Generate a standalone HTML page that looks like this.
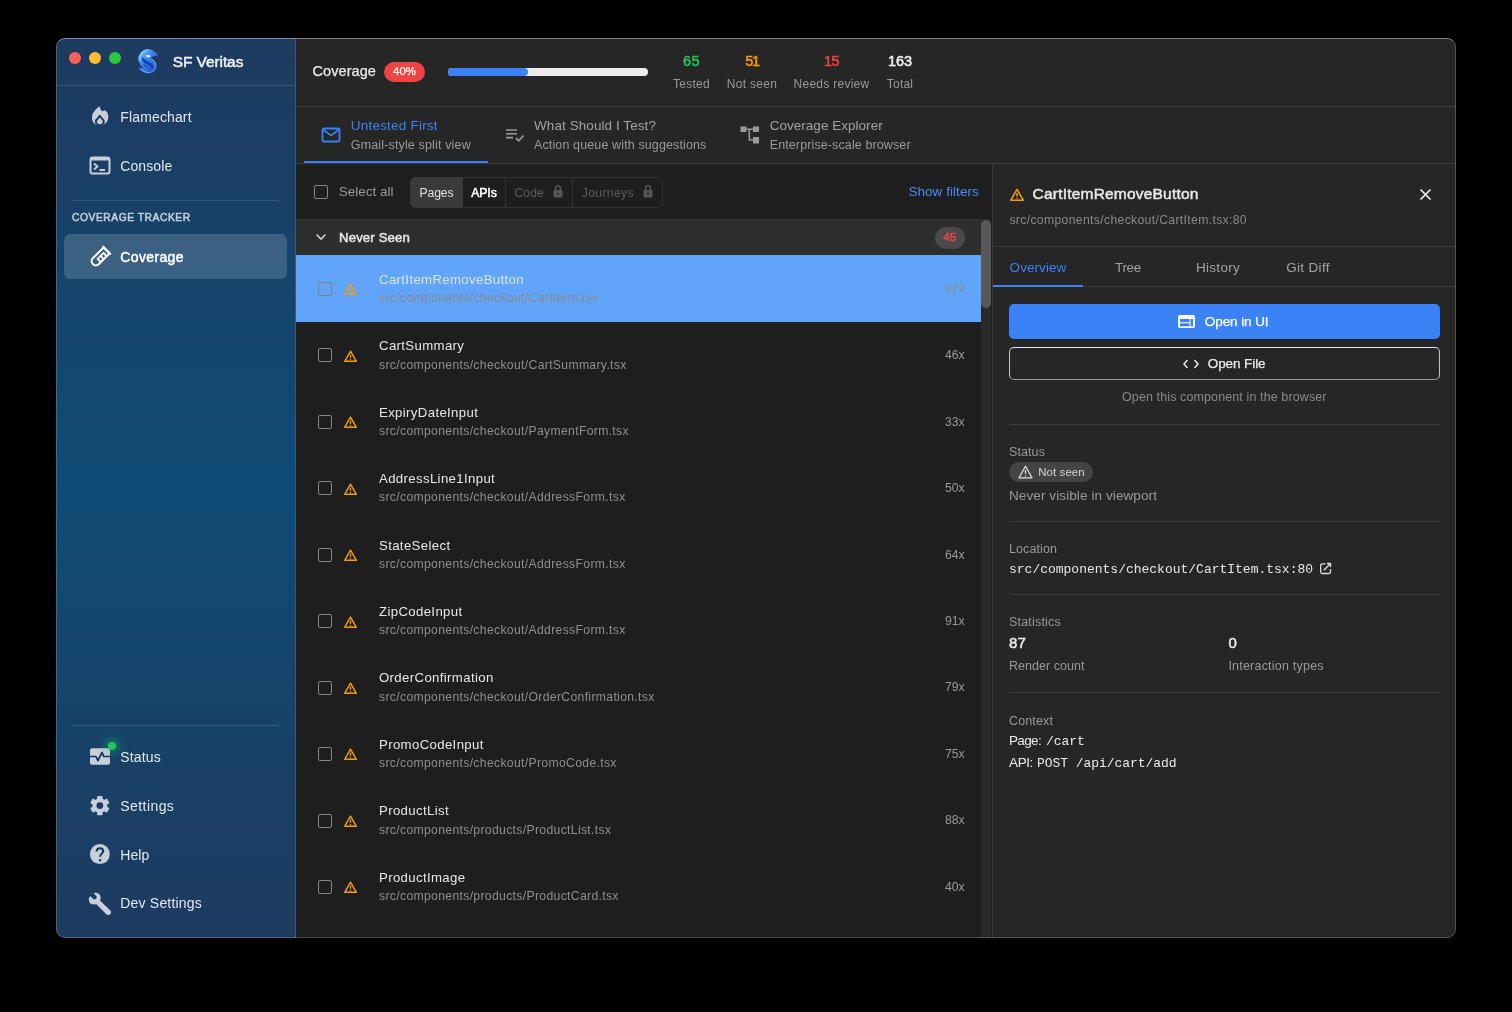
<!DOCTYPE html>
<html><head><meta charset="utf-8"><style>
html,body{margin:0;padding:0;background:#000;width:1512px;height:1012px;overflow:hidden}
#win{will-change:transform;position:absolute;left:56px;top:38px;width:1400px;height:900px;border-radius:9px;overflow:hidden;background:#1e1e1e}
.r{position:absolute;display:block}
.t{position:absolute;white-space:pre}
.S{font-family:"Liberation Sans", sans-serif}
.M{font-family:"Liberation Mono", monospace}
#edge{position:absolute;left:56px;top:38px;width:1400px;height:900px;border-radius:9px;box-sizing:border-box;border:1px solid rgba(255,255,255,0.2);border-top-color:rgba(255,255,255,0.42);pointer-events:none}
</style></head><body>
<div id="win">
<div class='r' style='left:0px;top:0px;width:239px;height:900px;background:linear-gradient(180deg,#1e3a5f 0%,#0f4c75 50%,#1e3a5f 100%)'></div>
<div class='r' style='left:239px;top:0px;width:1px;height:900px;background:#3a5878'></div>
<div class='r' style='left:13px;top:14px;width:12px;height:12px;background:#ff5f57;border-radius:50%'></div>
<div class='r' style='left:33px;top:14px;width:12px;height:12px;background:#febc2e;border-radius:50%'></div>
<div class='r' style='left:53px;top:14px;width:12px;height:12px;background:#28c840;border-radius:50%'></div>
<svg class='r' style='left:80px;top:9px;' width='25' height='28' viewBox='136 47 25 28'>
<defs><linearGradient id='lg' x1='0' y1='0' x2='1' y2='1'><stop offset='0' stop-color='#9adcff'/><stop offset='0.4' stop-color='#3a86ee'/><stop offset='0.75' stop-color='#2a64d8'/><stop offset='1' stop-color='#6cc8ff'/></linearGradient></defs>
<path d='M138 59.4 C139 53 143 49.2 148 49 C152 49 155.5 52 158.5 55.4 C155 55.6 152 56.4 150.5 57.8 C154 59.5 156.5 62.5 156.4 66.5 C156.2 70.5 152.5 73.4 148.5 73.4 C144 73.4 140 70.8 138 67.5 C140 68.6 141.8 69 143.2 68.8 C140.8 66.2 139.6 63 138 59.4 Z' fill='url(#lg)'/>
<path d='M142.3 56.8 C141.2 60.2 143.4 63.2 147 64.6 C150.2 65.9 152.2 67.6 151.6 70.6 C153.8 68.6 153.8 65 150.6 62.9 C148 61.3 144.8 60.4 142.3 56.8 Z' fill='#1b3cb4'/>
<path d='M143.5 64.5 C145.5 66.5 148 67 149.5 69.5' fill='none' stroke='#2451c8' stroke-width='1.1'/>
<path d='M151.2 58.6 C154.6 60.6 156 63.6 155.8 66.6 M140.6 68.6 C143 71 146 72.6 149 72.6 M139.5 58.5 C140.5 54 143.5 51 147.5 50.3' fill='none' stroke='#a8e4ff' stroke-width='0.8' opacity='0.8'/>
<ellipse cx='148.3' cy='56.2' rx='2.3' ry='1.4' fill='#e6efff' opacity='0.9'/>
</svg>
<div class='r' style='left:0px;top:47px;width:239px;height:1px;background:#3a5676'></div>
<svg class='r' style='left:32px;top:66px;' width='24' height='24' viewBox='88 104 24 24'>
<path d='M99.5 106.2 C97 108 93.6 111 92.4 114.5 C91.4 117.5 91.8 121 94 123.2 C95.8 124.8 98 125.1 99.8 125.1 C102 125.1 104.6 124.5 106.3 122.6 C108.3 120.3 108.7 117 108 114.5 C107.5 112.8 106.5 111.2 105 110.6 C104 110.3 103 110.8 102.3 111.4 C101.1 110.3 100.1 108.5 99.5 106.2 Z' fill='#c7cfdb'/>
<path d='M99.8 114.5 L95.5 119.4 C94.5 120.7 94.7 122.9 95.9 124.1 C96.9 125.1 98.4 125.6 99.8 125.6 C101.2 125.6 102.7 125.1 103.7 124.1 C104.9 122.9 105.1 120.7 104.1 119.4 Z' fill='#1c3b60'/>
<path d='M99.85 117.4 L97.4 120.5 C96.8 121.3 96.9 122.6 97.6 123.3 C98.2 123.9 99 124.2 99.85 124.2 C100.7 124.2 101.5 123.9 102.1 123.3 C102.8 122.6 102.9 121.3 102.3 120.5 Z' fill='#c7cfdb'/>
</svg>
<svg class='r' style='left:33px;top:118px;' width='22' height='19' viewBox='0 0 22 19'>
<rect x='1.5' y='1.5' width='19' height='16' rx='2' fill='none' stroke='#c7cfdb' stroke-width='2'/>
<rect x='1.5' y='1.5' width='19' height='3' fill='#c7cfdb'/>
<path d='M5 7.5 L8.5 10.5 L5 13.5' fill='none' stroke='#c7cfdb' stroke-width='1.8'/>
<path d='M10.5 14 L16 14' stroke='#c7cfdb' stroke-width='1.8'/>
</svg>
<div class='r' style='left:16px;top:162px;width:207px;height:1px;background:#3a5676'></div>
<div class='r' style='left:8px;top:196px;width:223px;height:45px;background:rgba(255,255,255,0.16);border-radius:6px'></div>
<svg class='r' style='left:30px;top:207px;' width='26' height='26' viewBox='0 0 26 26'>
<g transform='rotate(45 13 13)'>
<rect x='7.2' y='1' width='11.6' height='2.4' rx='0.6' fill='#fff'/>
<path d='M8.8 2.5 L8.8 17.6 C8.8 20 10.7 21.6 13 21.6 C15.3 21.6 17.2 20 17.2 17.6 L17.2 2.5' fill='none' stroke='#fff' stroke-width='2'/>
<path d='M12.6 5.5 L12.6 15.5' stroke='#fff' stroke-width='1.7'/>
<path d='M12.6 6.3 L17 6.3 M12.6 10.5 L16.2 10.5 M12.6 14.5 L16.2 14.5' stroke='#fff' stroke-width='1.9'/>
<rect x='13.4' y='7.1' width='2.9' height='2.6' fill='none'/>
</g>
</svg>
<div class='r' style='left:16px;top:687px;width:207px;height:1px;background:#3a5676'></div>
<svg class='r' style='left:32px;top:708px;' width='24' height='22' viewBox='88 746 24 22'>
<rect x='90' y='748.2' width='20' height='16.5' rx='2.2' fill='#c7cfdb'/>
<path d='M89 756.5 L96 756.5 L97.9 760.6 L102 752.3 L103.8 756.5 L111 756.5' fill='none' stroke='#132f52' stroke-width='1.7' stroke-linejoin='round'/>
</svg>
<div class='r' style='left:51.8px;top:704.3px;width:8.0px;height:8.0px;background:#22c55e;border-radius:50%;box-shadow:0 0 9px 4px rgba(34,197,94,0.36)'></div>
<svg class='r' style='left:32px;top:756px;' width='24' height='24' viewBox='88 794 24 24'><rect x='97.15' y='795.9' width='5.4' height='5' rx='0.8' fill='#c7cfdb' transform='rotate(0 99.85 805.6)'/><rect x='97.15' y='795.9' width='5.4' height='5' rx='0.8' fill='#c7cfdb' transform='rotate(60 99.85 805.6)'/><rect x='97.15' y='795.9' width='5.4' height='5' rx='0.8' fill='#c7cfdb' transform='rotate(120 99.85 805.6)'/><rect x='97.15' y='795.9' width='5.4' height='5' rx='0.8' fill='#c7cfdb' transform='rotate(180 99.85 805.6)'/><rect x='97.15' y='795.9' width='5.4' height='5' rx='0.8' fill='#c7cfdb' transform='rotate(240 99.85 805.6)'/><rect x='97.15' y='795.9' width='5.4' height='5' rx='0.8' fill='#c7cfdb' transform='rotate(300 99.85 805.6)'/><circle cx='99.85' cy='805.6' r='7.3' fill='#c7cfdb'/><circle cx='99.85' cy='805.6' r='3.4' fill='#1b3b61'/></svg>
<svg class='r' style='left:32px;top:804px;' width='24' height='24' viewBox='88 842 24 24'>
<circle cx='99.85' cy='854.1' r='10' fill='#c7cfdb'/>
<path d='M96.7 851.6 C96.7 849.4 98.1 848.2 99.95 848.2 C101.85 848.2 103.2 849.5 103.2 851.1 C103.2 853.2 100.2 853.7 100.1 856.8' fill='none' stroke='#19385e' stroke-width='2.1'/>
<rect x='99' y='859.2' width='2.2' height='2.2' fill='#19385e'/>
</svg>
<svg class='r' style='left:32px;top:854px;' width='24' height='24' viewBox='0 0 24 24'>
<path d='M2.5 4.2 L5.8 7.4 L8.2 6.8 L8.8 4.4 L5.6 1.2 C8.2 0.2 11.2 1.2 12.3 3.7 C13 5.3 12.8 7 12 8.4 L22.4 18.6 C23.3 19.5 23.3 20.9 22.4 21.8 L21.8 22.4 C20.9 23.3 19.5 23.3 18.6 22.4 L8.2 12 C6.8 12.7 5.1 12.8 3.6 12.1 C1.2 11 0.2 7.8 1.2 5.4 Z' fill='#c7cfdb'/>
</svg>
<div class='r' style='left:240px;top:0px;width:1160px;height:68px;background:#262626'></div>
<div class='r' style='left:240px;top:68px;width:1160px;height:1px;background:#3a3a3a'></div>
<div class='r' style='left:328px;top:24px;width:41px;height:20px;background:#ef4444;border-radius:10px'></div>
<div class='r' style='left:392px;top:30px;width:200px;height:8px;background:#ececec;border-radius:4px'></div>
<div class='r' style='left:392px;top:30px;width:80px;height:8px;background:#3b82f6;border-radius:4px'></div>
<div class='r' style='left:240px;top:69px;width:1160px;height:57px;background:#262626'></div>
<div class='r' style='left:240px;top:125px;width:1160px;height:1px;background:#3a3a3a'></div>
<div class='r' style='left:248px;top:123px;width:184px;height:2px;background:#3b82f6'></div>
<svg class='r' style='left:265px;top:89px;' width='20' height='16' viewBox='0 0 20 16'><rect x='1.5' y='1.5' width='17' height='13' rx='1.5' fill='none' stroke='#3b82f6' stroke-width='1.8'/><path d='M1.8 2.5 L10 8.5 L18.2 2.5' fill='none' stroke='#3b82f6' stroke-width='1.8'/></svg>
<svg class='r' style='left:449px;top:90px;' width='20' height='15' viewBox='0 0 20 15'><path d='M1 2 L12 2 M1 5.8 L12 5.8 M1 9.6 L8 9.6' stroke='#9a9a9a' stroke-width='1.6'/><path d='M11 10 L13.8 12.8 L18.5 7.5' fill='none' stroke='#9a9a9a' stroke-width='1.8'/></svg>
<svg class='r' style='left:684px;top:88px;' width='20' height='18' viewBox='0 0 20 18'><rect x='0.5' y='0.5' width='6' height='5.5' fill='#9a9a9a'/><rect x='13' y='0.5' width='6' height='5.5' fill='#9a9a9a'/><rect x='13' y='11' width='6' height='6.5' fill='#9a9a9a'/><path d='M6.5 3.2 L13 3.2 M9.3 3.2 L9.3 14 L13 14' fill='none' stroke='#9a9a9a' stroke-width='1.6'/></svg>
<div class='r' style='left:240px;top:126px;width:696px;height:774px;background:#1e1e1e'></div>
<div class='r' style='left:936px;top:126px;width:1px;height:774px;background:#3a3a3a'></div>
<div class='r' style='left:258px;top:147px;width:14px;height:14px;border:1.5px solid #8a8a8a;border-radius:2px;box-sizing:border-box'></div>
<div class='r' style='left:354px;top:139px;width:253px;height:31px;border:1px solid #333;border-radius:6px;box-sizing:border-box'></div>
<div class='r' style='left:354px;top:139px;width:53px;height:31px;background:#3a3a3a;border-radius:6px 0 0 6px'></div>
<div class='r' style='left:449px;top:140px;width:1px;height:29px;background:#333'></div>
<div class='r' style='left:516px;top:140px;width:1px;height:29px;background:#333'></div>
<svg class='r' style='left:496.5px;top:147px;' width='10' height='13' viewBox='0 0 10 13'><rect x='0.5' y='5' width='9' height='7.5' rx='1' fill='#555'/><path d='M2.5 5.5 L2.5 3.5 C2.5 1.8 3.6 0.8 5 0.8 C6.4 0.8 7.5 1.8 7.5 3.5 L7.5 5.5' fill='none' stroke='#555' stroke-width='1.6'/><circle cx='5' cy='8.8' r='1' fill='#1e1e1e'/></svg>
<svg class='r' style='left:586.5px;top:147px;' width='10' height='13' viewBox='0 0 10 13'><rect x='0.5' y='5' width='9' height='7.5' rx='1' fill='#555'/><path d='M2.5 5.5 L2.5 3.5 C2.5 1.8 3.6 0.8 5 0.8 C6.4 0.8 7.5 1.8 7.5 3.5 L7.5 5.5' fill='none' stroke='#555' stroke-width='1.6'/><circle cx='5' cy='8.8' r='1' fill='#1e1e1e'/></svg>
<div class='r' style='left:240px;top:181px;width:685px;height:36px;background:#2e2e2e'></div>
<div class='r' style='left:240px;top:181px;width:685px;height:1px;background:#353535'></div>
<svg class='r' style='left:259px;top:195px;' width='12' height='8' viewBox='0 0 12 8'><path d='M1.5 1.5 L6 6 L10.5 1.5' fill='none' stroke='#d0d0d0' stroke-width='1.6'/></svg>
<div class='r' style='left:878.5px;top:188.5px;width:30.5px;height:22.0px;background:#4a4a4a;border-radius:11px'></div>
<div class='r' style='left:240px;top:217px;width:685px;height:67px;background:#60a5fa'></div>
<div class='r' style='left:261.5px;top:244px;width:14.0px;height:14px;border:1.6px solid #808080;border-radius:2px;box-sizing:border-box'></div>
<svg class='r' style='left:287.5px;top:245px;' width='13' height='12' viewBox='0 0 13 12'><path d='M6.5 1.2 L12.3 11.3 L0.7 11.3 Z' fill='none' stroke='#f59e0b' stroke-width='1.4' stroke-linejoin='round'/><path d='M6.5 4.6 L6.5 7.8' stroke='#f59e0b' stroke-width='1.4'/><circle cx='6.5' cy='9.5' r='0.75' fill='#f59e0b'/></svg>
<div class='r' style='left:261.5px;top:310px;width:14.0px;height:14px;border:1.6px solid #858585;border-radius:2px;box-sizing:border-box'></div>
<svg class='r' style='left:287.5px;top:312px;' width='13' height='12' viewBox='0 0 13 12'><path d='M6.5 1.2 L12.3 11.3 L0.7 11.3 Z' fill='none' stroke='#f59e0b' stroke-width='1.4' stroke-linejoin='round'/><path d='M6.5 4.6 L6.5 7.8' stroke='#f59e0b' stroke-width='1.4'/><circle cx='6.5' cy='9.5' r='0.75' fill='#f59e0b'/></svg>
<div class='r' style='left:261.5px;top:377px;width:14.0px;height:14px;border:1.6px solid #858585;border-radius:2px;box-sizing:border-box'></div>
<svg class='r' style='left:287.5px;top:378px;' width='13' height='12' viewBox='0 0 13 12'><path d='M6.5 1.2 L12.3 11.3 L0.7 11.3 Z' fill='none' stroke='#f59e0b' stroke-width='1.4' stroke-linejoin='round'/><path d='M6.5 4.6 L6.5 7.8' stroke='#f59e0b' stroke-width='1.4'/><circle cx='6.5' cy='9.5' r='0.75' fill='#f59e0b'/></svg>
<div class='r' style='left:261.5px;top:443px;width:14.0px;height:14px;border:1.6px solid #858585;border-radius:2px;box-sizing:border-box'></div>
<svg class='r' style='left:287.5px;top:445px;' width='13' height='12' viewBox='0 0 13 12'><path d='M6.5 1.2 L12.3 11.3 L0.7 11.3 Z' fill='none' stroke='#f59e0b' stroke-width='1.4' stroke-linejoin='round'/><path d='M6.5 4.6 L6.5 7.8' stroke='#f59e0b' stroke-width='1.4'/><circle cx='6.5' cy='9.5' r='0.75' fill='#f59e0b'/></svg>
<div class='r' style='left:261.5px;top:510px;width:14.0px;height:14px;border:1.6px solid #858585;border-radius:2px;box-sizing:border-box'></div>
<svg class='r' style='left:287.5px;top:511px;' width='13' height='12' viewBox='0 0 13 12'><path d='M6.5 1.2 L12.3 11.3 L0.7 11.3 Z' fill='none' stroke='#f59e0b' stroke-width='1.4' stroke-linejoin='round'/><path d='M6.5 4.6 L6.5 7.8' stroke='#f59e0b' stroke-width='1.4'/><circle cx='6.5' cy='9.5' r='0.75' fill='#f59e0b'/></svg>
<div class='r' style='left:261.5px;top:576px;width:14.0px;height:14px;border:1.6px solid #858585;border-radius:2px;box-sizing:border-box'></div>
<svg class='r' style='left:287.5px;top:578px;' width='13' height='12' viewBox='0 0 13 12'><path d='M6.5 1.2 L12.3 11.3 L0.7 11.3 Z' fill='none' stroke='#f59e0b' stroke-width='1.4' stroke-linejoin='round'/><path d='M6.5 4.6 L6.5 7.8' stroke='#f59e0b' stroke-width='1.4'/><circle cx='6.5' cy='9.5' r='0.75' fill='#f59e0b'/></svg>
<div class='r' style='left:261.5px;top:643px;width:14.0px;height:14px;border:1.6px solid #858585;border-radius:2px;box-sizing:border-box'></div>
<svg class='r' style='left:287.5px;top:644px;' width='13' height='12' viewBox='0 0 13 12'><path d='M6.5 1.2 L12.3 11.3 L0.7 11.3 Z' fill='none' stroke='#f59e0b' stroke-width='1.4' stroke-linejoin='round'/><path d='M6.5 4.6 L6.5 7.8' stroke='#f59e0b' stroke-width='1.4'/><circle cx='6.5' cy='9.5' r='0.75' fill='#f59e0b'/></svg>
<div class='r' style='left:261.5px;top:709px;width:14.0px;height:14px;border:1.6px solid #858585;border-radius:2px;box-sizing:border-box'></div>
<svg class='r' style='left:287.5px;top:710px;' width='13' height='12' viewBox='0 0 13 12'><path d='M6.5 1.2 L12.3 11.3 L0.7 11.3 Z' fill='none' stroke='#f59e0b' stroke-width='1.4' stroke-linejoin='round'/><path d='M6.5 4.6 L6.5 7.8' stroke='#f59e0b' stroke-width='1.4'/><circle cx='6.5' cy='9.5' r='0.75' fill='#f59e0b'/></svg>
<div class='r' style='left:261.5px;top:776px;width:14.0px;height:14px;border:1.6px solid #858585;border-radius:2px;box-sizing:border-box'></div>
<svg class='r' style='left:287.5px;top:777px;' width='13' height='12' viewBox='0 0 13 12'><path d='M6.5 1.2 L12.3 11.3 L0.7 11.3 Z' fill='none' stroke='#f59e0b' stroke-width='1.4' stroke-linejoin='round'/><path d='M6.5 4.6 L6.5 7.8' stroke='#f59e0b' stroke-width='1.4'/><circle cx='6.5' cy='9.5' r='0.75' fill='#f59e0b'/></svg>
<div class='r' style='left:261.5px;top:842px;width:14.0px;height:14px;border:1.6px solid #858585;border-radius:2px;box-sizing:border-box'></div>
<svg class='r' style='left:287.5px;top:843px;' width='13' height='12' viewBox='0 0 13 12'><path d='M6.5 1.2 L12.3 11.3 L0.7 11.3 Z' fill='none' stroke='#f59e0b' stroke-width='1.4' stroke-linejoin='round'/><path d='M6.5 4.6 L6.5 7.8' stroke='#f59e0b' stroke-width='1.4'/><circle cx='6.5' cy='9.5' r='0.75' fill='#f59e0b'/></svg>
<div class='r' style='left:925px;top:181px;width:10px;height:719px;background:#2a2a2a'></div>
<div class='r' style='left:925px;top:182px;width:10px;height:88px;background:#585858;border-radius:5px'></div>
<div class='r' style='left:937px;top:126px;width:463px;height:774px;background:#262626'></div>
<svg class='r' style='left:953.5px;top:149.8px;' width='14' height='13' viewBox='0 0 13 12'><path d='M6.5 1.2 L12.3 11.3 L0.7 11.3 Z' fill='none' stroke='#f59e0b' stroke-width='1.4' stroke-linejoin='round'/><path d='M6.5 4.6 L6.5 7.8' stroke='#f59e0b' stroke-width='1.4'/><circle cx='6.5' cy='9.5' r='0.75' fill='#f59e0b'/></svg>
<svg class='r' style='left:1363px;top:150px;' width='13' height='13' viewBox='0 0 13 13'><path d='M1.5 1.5 L11.5 11.5 M11.5 1.5 L1.5 11.5' stroke='#f0f0f0' stroke-width='1.7'/></svg>
<div class='r' style='left:937px;top:208px;width:463px;height:1px;background:#3a3a3a'></div>
<div class='r' style='left:937px;top:248px;width:463px;height:1px;background:#3a3a3a'></div>
<div class='r' style='left:937px;top:247px;width:90px;height:2px;background:#3b82f6'></div>
<div class='r' style='left:953px;top:266px;width:431px;height:35px;background:#3b82f6;border-radius:5px'></div>
<svg class='r' style='left:1122px;top:277px;' width='17' height='13' viewBox='0 0 17 13'><rect x='0' y='0' width='17' height='13' rx='2' fill='#fff'/><rect x='2' y='4' width='9.5' height='3.2' fill='#3b82f6'/><rect x='2' y='8.3' width='9.5' height='3' fill='#3b82f6'/><rect x='12.5' y='4' width='2.5' height='7.3' fill='#3b82f6'/></svg>
<div class='r' style='left:953px;top:309px;width:431px;height:33px;border:1.5px solid #c4c4c4;border-top-color:#e6e6e6;border-bottom-color:#9c9c9c;border-radius:5px;box-sizing:border-box'></div>
<svg class='r' style='left:1126.5px;top:320.5px;' width='16' height='10' viewBox='0 0 16 10'><path d='M4.5 1 L1 5 L4.5 9 M11.5 1 L15 5 L11.5 9' fill='none' stroke='#e8e8e8' stroke-width='1.5'/></svg>
<div class='r' style='left:953px;top:386px;width:431px;height:1px;background:#3a3a3a'></div>
<div class='r' style='left:953px;top:424px;width:84px;height:20px;background:#444444;border-radius:10px'></div>
<svg class='r' style='left:962px;top:427px;' width='15' height='14' viewBox='0 0 15 14'><path d='M7.5 1.2 L14 12.8 L1 12.8 Z' fill='none' stroke='#e0e0e0' stroke-width='1.3' stroke-linejoin='round'/><path d='M7.5 5 L7.5 8.8' stroke='#e0e0e0' stroke-width='1.3'/><circle cx='7.5' cy='10.7' r='0.7' fill='#e0e0e0'/></svg>
<div class='r' style='left:953px;top:483px;width:431px;height:1px;background:#3a3a3a'></div>
<svg class='r' style='left:1263px;top:524px;' width='13' height='13' viewBox='0 0 13 13'><path d='M6.5 1.8 L3.2 1.8 C2.2 1.8 1.7 2.3 1.7 3.3 L1.7 10 C1.7 11 2.2 11.5 3.2 11.5 L10 11.5 C11 11.5 11.5 11 11.5 10 L11.5 7' fill='none' stroke='#e0e0e0' stroke-width='1.3'/><path d='M8 1.5 L11.5 1.5 L11.5 5 M11.3 1.7 L4.8 8.2' fill='none' stroke='#e0e0e0' stroke-width='1.3'/></svg>
<div class='r' style='left:953px;top:556px;width:431px;height:1px;background:#3a3a3a'></div>
<div class='r' style='left:953px;top:654px;width:431px;height:1px;background:#3a3a3a'></div>
<div class='t S' style='left:116.70px;top:16.23px;font-size:15.5px;line-height:15.5px;color:#eef2f7;font-weight:400;letter-spacing:-0.090px;-webkit-text-stroke:0.5px #eef2f7;'>SF Veritas</div>
<div class='t S' style='left:64.30px;top:71.90px;font-size:14px;line-height:14px;color:#e3e8ef;font-weight:400;letter-spacing:0.137px;'>Flamechart</div>
<div class='t S' style='left:64.30px;top:121.10px;font-size:14px;line-height:14px;color:#e3e8ef;font-weight:400;letter-spacing:0.089px;'>Console</div>
<div class='t S' style='left:16.00px;top:175.25px;font-size:10.3px;line-height:10.3px;color:#c8d0dc;font-weight:400;letter-spacing:0.528px;-webkit-text-stroke:0.5px #c8d0dc;'>COVERAGE TRACKER</div>
<div class='t S' style='left:64.30px;top:212.30px;font-size:14px;line-height:14px;color:#ffffff;font-weight:400;letter-spacing:0.350px;-webkit-text-stroke:0.5px #ffffff;'>Coverage</div>
<div class='t S' style='left:64.30px;top:711.90px;font-size:14px;line-height:14px;color:#e3e8ef;font-weight:400;letter-spacing:0.166px;'>Status</div>
<div class='t S' style='left:64.30px;top:760.80px;font-size:14px;line-height:14px;color:#e3e8ef;font-weight:400;letter-spacing:0.426px;'>Settings</div>
<div class='t S' style='left:64.30px;top:810.10px;font-size:14px;line-height:14px;color:#e3e8ef;font-weight:400;letter-spacing:0.051px;'>Help</div>
<div class='t S' style='left:64.30px;top:858.40px;font-size:14px;line-height:14px;color:#e3e8ef;font-weight:400;letter-spacing:0.194px;'>Dev Settings</div>
<div class='t S' style='left:256.50px;top:26.17px;font-size:14.5px;line-height:14.5px;color:#ececec;font-weight:400;letter-spacing:0.078px;-webkit-text-stroke:0.25px #ececec;'>Coverage</div>
<div class='t S' style='left:337.00px;top:27.72px;font-size:11.5px;line-height:11.5px;color:#ffffff;font-weight:400;letter-spacing:-0.010px;-webkit-text-stroke:0.25px #ffffff;'>40%</div>
<div class='t S' style='left:627.00px;top:15.67px;font-size:14.5px;line-height:14.5px;color:#22c55e;font-weight:400;letter-spacing:0.430px;-webkit-text-stroke:0.5px #22c55e;'>65</div>
<div class='t S' style='left:617.00px;top:39.80px;font-size:12px;line-height:12px;color:#9a9a9a;font-weight:400;letter-spacing:0.273px;'>Tested</div>
<div class='t S' style='left:689.25px;top:15.67px;font-size:14.5px;line-height:14.5px;color:#f59e0b;font-weight:400;letter-spacing:-1.320px;-webkit-text-stroke:0.5px #f59e0b;'>51</div>
<div class='t S' style='left:670.75px;top:39.80px;font-size:12px;line-height:12px;color:#9a9a9a;font-weight:400;letter-spacing:0.309px;'>Not seen</div>
<div class='t S' style='left:768.00px;top:15.67px;font-size:14.5px;line-height:14.5px;color:#ef4444;font-weight:400;letter-spacing:-0.570px;-webkit-text-stroke:0.5px #ef4444;'>15</div>
<div class='t S' style='left:737.50px;top:39.80px;font-size:12px;line-height:12px;color:#9a9a9a;font-weight:400;letter-spacing:0.275px;'>Needs review</div>
<div class='t S' style='left:832.00px;top:15.67px;font-size:14.5px;line-height:14.5px;color:#f0f0f0;font-weight:400;letter-spacing:-0.068px;-webkit-text-stroke:0.5px #f0f0f0;'>163</div>
<div class='t S' style='left:830.75px;top:39.80px;font-size:12px;line-height:12px;color:#9a9a9a;font-weight:400;letter-spacing:0.228px;'>Total</div>
<div class='t S' style='left:294.80px;top:80.53px;font-size:13.5px;line-height:13.5px;color:#3b82f6;font-weight:400;letter-spacing:0.212px;'>Untested First</div>
<div class='t S' style='left:294.80px;top:100.97px;font-size:12.5px;line-height:12.5px;color:#9a9a9a;font-weight:400;letter-spacing:0.151px;'>Gmail-style split view</div>
<div class='t S' style='left:478.00px;top:80.53px;font-size:13.5px;line-height:13.5px;color:#a3a3a3;font-weight:400;letter-spacing:0.075px;'>What Should I Test?</div>
<div class='t S' style='left:478.00px;top:100.97px;font-size:12.5px;line-height:12.5px;color:#9a9a9a;font-weight:400;letter-spacing:0.125px;'>Action queue with suggestions</div>
<div class='t S' style='left:713.70px;top:80.53px;font-size:13.5px;line-height:13.5px;color:#a3a3a3;font-weight:400;letter-spacing:0.026px;'>Coverage Explorer</div>
<div class='t S' style='left:713.70px;top:100.97px;font-size:12.5px;line-height:12.5px;color:#9a9a9a;font-weight:400;letter-spacing:0.115px;'>Enterprise-scale browser</div>
<div class='t S' style='left:282.80px;top:147.22px;font-size:13.5px;line-height:13.5px;color:#9a9a9a;font-weight:400;letter-spacing:-0.008px;'>Select all</div>
<div class='t S' style='left:363.50px;top:148.83px;font-size:12.2px;line-height:12.2px;color:#e0e0e0;font-weight:400;letter-spacing:-0.113px;'>Pages</div>
<div class='t S' style='left:415.20px;top:148.83px;font-size:12.2px;line-height:12.2px;color:#ffffff;font-weight:400;letter-spacing:-0.062px;-webkit-text-stroke:0.5px #ffffff;'>APIs</div>
<div class='t S' style='left:458.40px;top:148.83px;font-size:12.2px;line-height:12.2px;color:#5c5c5c;font-weight:400;letter-spacing:0.090px;'>Code</div>
<div class='t S' style='left:525.70px;top:148.83px;font-size:12.2px;line-height:12.2px;color:#5c5c5c;font-weight:400;letter-spacing:0.356px;'>Journeys</div>
<div class='t S' style='left:852.40px;top:147.03px;font-size:13.5px;line-height:13.5px;color:#4a8cf5;font-weight:400;letter-spacing:0.052px;'>Show filters</div>
<div class='t S' style='left:283.00px;top:192.98px;font-size:13.2px;line-height:13.2px;color:#e8e8e8;font-weight:400;letter-spacing:0.136px;-webkit-text-stroke:0.5px #e8e8e8;'>Never Seen</div>
<div class='t S' style='left:887.30px;top:193.72px;font-size:11.5px;line-height:11.5px;color:#ef4444;font-weight:400;letter-spacing:0.102px;-webkit-text-stroke:0.5px #ef4444;'>45</div>
<div class='t S' style='left:323.00px;top:234.78px;font-size:13.2px;line-height:13.2px;color:#dde3ea;font-weight:400;letter-spacing:0.360px;'>CartItemRemoveButton</div>
<div class='t S' style='left:323.00px;top:254.13px;font-size:12.2px;line-height:12.2px;color:#8a8a8a;font-weight:400;letter-spacing:0.330px;'>src/components/checkout/CartItem.tsx</div>
<div class='t S' style='left:889.10px;top:244.73px;font-size:12.2px;line-height:12.2px;color:#8a8a8a;font-weight:400;letter-spacing:-0.085px;'>87x</div>
<div class='t S' style='left:323.00px;top:301.23px;font-size:13.2px;line-height:13.2px;color:#e8e8e8;font-weight:400;letter-spacing:0.360px;'>CartSummary</div>
<div class='t S' style='left:323.00px;top:320.58px;font-size:12.2px;line-height:12.2px;color:#8f8f8f;font-weight:400;letter-spacing:0.330px;'>src/components/checkout/CartSummary.tsx</div>
<div class='t S' style='left:889.10px;top:311.18px;font-size:12.2px;line-height:12.2px;color:#9a9a9a;font-weight:400;letter-spacing:-0.085px;'>46x</div>
<div class='t S' style='left:323.00px;top:367.68px;font-size:13.2px;line-height:13.2px;color:#e8e8e8;font-weight:400;letter-spacing:0.360px;'>ExpiryDateInput</div>
<div class='t S' style='left:323.00px;top:387.03px;font-size:12.2px;line-height:12.2px;color:#8f8f8f;font-weight:400;letter-spacing:0.330px;'>src/components/checkout/PaymentForm.tsx</div>
<div class='t S' style='left:889.10px;top:377.63px;font-size:12.2px;line-height:12.2px;color:#9a9a9a;font-weight:400;letter-spacing:-0.085px;'>33x</div>
<div class='t S' style='left:323.00px;top:434.13px;font-size:13.2px;line-height:13.2px;color:#e8e8e8;font-weight:400;letter-spacing:0.360px;'>AddressLine1Input</div>
<div class='t S' style='left:323.00px;top:453.48px;font-size:12.2px;line-height:12.2px;color:#8f8f8f;font-weight:400;letter-spacing:0.330px;'>src/components/checkout/AddressForm.tsx</div>
<div class='t S' style='left:889.10px;top:444.08px;font-size:12.2px;line-height:12.2px;color:#9a9a9a;font-weight:400;letter-spacing:-0.085px;'>50x</div>
<div class='t S' style='left:323.00px;top:500.58px;font-size:13.2px;line-height:13.2px;color:#e8e8e8;font-weight:400;letter-spacing:0.360px;'>StateSelect</div>
<div class='t S' style='left:323.00px;top:519.93px;font-size:12.2px;line-height:12.2px;color:#8f8f8f;font-weight:400;letter-spacing:0.330px;'>src/components/checkout/AddressForm.tsx</div>
<div class='t S' style='left:889.10px;top:510.53px;font-size:12.2px;line-height:12.2px;color:#9a9a9a;font-weight:400;letter-spacing:-0.085px;'>64x</div>
<div class='t S' style='left:323.00px;top:567.03px;font-size:13.2px;line-height:13.2px;color:#e8e8e8;font-weight:400;letter-spacing:0.360px;'>ZipCodeInput</div>
<div class='t S' style='left:323.00px;top:586.38px;font-size:12.2px;line-height:12.2px;color:#8f8f8f;font-weight:400;letter-spacing:0.330px;'>src/components/checkout/AddressForm.tsx</div>
<div class='t S' style='left:889.10px;top:576.98px;font-size:12.2px;line-height:12.2px;color:#9a9a9a;font-weight:400;letter-spacing:-0.085px;'>91x</div>
<div class='t S' style='left:323.00px;top:633.48px;font-size:13.2px;line-height:13.2px;color:#e8e8e8;font-weight:400;letter-spacing:0.360px;'>OrderConfirmation</div>
<div class='t S' style='left:323.00px;top:652.83px;font-size:12.2px;line-height:12.2px;color:#8f8f8f;font-weight:400;letter-spacing:0.330px;'>src/components/checkout/OrderConfirmation.tsx</div>
<div class='t S' style='left:889.10px;top:643.43px;font-size:12.2px;line-height:12.2px;color:#9a9a9a;font-weight:400;letter-spacing:-0.085px;'>79x</div>
<div class='t S' style='left:323.00px;top:699.93px;font-size:13.2px;line-height:13.2px;color:#e8e8e8;font-weight:400;letter-spacing:0.360px;'>PromoCodeInput</div>
<div class='t S' style='left:323.00px;top:719.28px;font-size:12.2px;line-height:12.2px;color:#8f8f8f;font-weight:400;letter-spacing:0.330px;'>src/components/checkout/PromoCode.tsx</div>
<div class='t S' style='left:889.10px;top:709.88px;font-size:12.2px;line-height:12.2px;color:#9a9a9a;font-weight:400;letter-spacing:-0.085px;'>75x</div>
<div class='t S' style='left:323.00px;top:766.38px;font-size:13.2px;line-height:13.2px;color:#e8e8e8;font-weight:400;letter-spacing:0.360px;'>ProductList</div>
<div class='t S' style='left:323.00px;top:785.73px;font-size:12.2px;line-height:12.2px;color:#8f8f8f;font-weight:400;letter-spacing:0.330px;'>src/components/products/ProductList.tsx</div>
<div class='t S' style='left:889.10px;top:776.33px;font-size:12.2px;line-height:12.2px;color:#9a9a9a;font-weight:400;letter-spacing:-0.085px;'>88x</div>
<div class='t S' style='left:323.00px;top:832.83px;font-size:13.2px;line-height:13.2px;color:#e8e8e8;font-weight:400;letter-spacing:0.360px;'>ProductImage</div>
<div class='t S' style='left:323.00px;top:852.18px;font-size:12.2px;line-height:12.2px;color:#8f8f8f;font-weight:400;letter-spacing:0.330px;'>src/components/products/ProductCard.tsx</div>
<div class='t S' style='left:889.10px;top:842.78px;font-size:12.2px;line-height:12.2px;color:#9a9a9a;font-weight:400;letter-spacing:-0.085px;'>40x</div>
<div class='t S' style='left:976.60px;top:148.42px;font-size:15.5px;line-height:15.5px;color:#e8e8e8;font-weight:400;letter-spacing:0.202px;-webkit-text-stroke:0.5px #e8e8e8;'>CartItemRemoveButton</div>
<div class='t S' style='left:953.40px;top:176.03px;font-size:12.2px;line-height:12.2px;color:#8a8a8a;font-weight:400;letter-spacing:0.343px;'>src/components/checkout/CartItem.tsx:80</div>
<div class='t S' style='left:953.60px;top:222.92px;font-size:13.5px;line-height:13.5px;color:#3b82f6;font-weight:400;letter-spacing:0.067px;'>Overview</div>
<div class='t S' style='left:1059.00px;top:222.92px;font-size:13.5px;line-height:13.5px;color:#a3a3a3;font-weight:400;letter-spacing:-0.316px;'>Tree</div>
<div class='t S' style='left:1140.00px;top:222.92px;font-size:13.5px;line-height:13.5px;color:#a3a3a3;font-weight:400;letter-spacing:0.283px;'>History</div>
<div class='t S' style='left:1230.20px;top:222.92px;font-size:13.5px;line-height:13.5px;color:#a3a3a3;font-weight:400;letter-spacing:0.323px;'>Git Diff</div>
<div class='t S' style='left:1148.80px;top:276.72px;font-size:13.5px;line-height:13.5px;color:#ffffff;font-weight:400;letter-spacing:-0.085px;-webkit-text-stroke:0.25px #ffffff;'>Open in UI</div>
<div class='t S' style='left:1151.80px;top:318.72px;font-size:13.5px;line-height:13.5px;color:#ececec;font-weight:400;letter-spacing:-0.092px;-webkit-text-stroke:0.25px #ececec;'>Open File</div>
<div class='t S' style='left:1066.00px;top:352.68px;font-size:12.5px;line-height:12.5px;color:#8a8a8a;font-weight:400;letter-spacing:0.111px;'>Open this component in the browser</div>
<div class='t S' style='left:953.00px;top:407.68px;font-size:12.5px;line-height:12.5px;color:#9a9a9a;font-weight:400;letter-spacing:0.094px;'>Status</div>
<div class='t S' style='left:982.20px;top:429.03px;font-size:11.5px;line-height:11.5px;color:#d4d4d4;font-weight:400;letter-spacing:0.071px;'>Not seen</div>
<div class='t S' style='left:953.00px;top:450.92px;font-size:13.5px;line-height:13.5px;color:#9a9a9a;font-weight:400;letter-spacing:0.098px;'>Never visible in viewport</div>
<div class='t S' style='left:953.00px;top:504.98px;font-size:12.5px;line-height:12.5px;color:#9a9a9a;font-weight:400;letter-spacing:0.092px;'>Location</div>
<div class='t M' style='left:953.00px;top:525.02px;font-size:13px;line-height:13px;color:#e8e8e8;font-weight:400;letter-spacing:-0.006px;'>src/components/checkout/CartItem.tsx:80</div>
<div class='t S' style='left:953.00px;top:577.67px;font-size:12.5px;line-height:12.5px;color:#9a9a9a;font-weight:400;letter-spacing:0.198px;'>Statistics</div>
<div class='t S' style='left:953.00px;top:597.25px;font-size:15px;line-height:15px;color:#ececec;font-weight:400;letter-spacing:0.156px;-webkit-text-stroke:0.5px #ececec;'>87</div>
<div class='t S' style='left:1172.40px;top:597.25px;font-size:15px;line-height:15px;color:#ececec;font-weight:400;letter-spacing:0.000px;-webkit-text-stroke:0.5px #ececec;'>0</div>
<div class='t S' style='left:953.00px;top:622.38px;font-size:12.5px;line-height:12.5px;color:#9a9a9a;font-weight:400;letter-spacing:0.028px;'>Render count</div>
<div class='t S' style='left:1172.40px;top:622.38px;font-size:12.5px;line-height:12.5px;color:#9a9a9a;font-weight:400;letter-spacing:0.217px;'>Interaction types</div>
<div class='t S' style='left:953.00px;top:676.58px;font-size:12.5px;line-height:12.5px;color:#9a9a9a;font-weight:400;letter-spacing:0.129px;'>Context</div>
<div class='t S' style='left:953.00px;top:696.12px;font-size:13.5px;line-height:13.5px;color:#ececec;font-weight:400;letter-spacing:-0.656px;'>Page:</div>
<div class='t M' style='left:990.00px;top:696.92px;font-size:13px;line-height:13px;color:#ececec;font-weight:400;letter-spacing:-0.043px;'>/cart</div>
<div class='t S' style='left:953.00px;top:718.23px;font-size:13.5px;line-height:13.5px;color:#ececec;font-weight:400;letter-spacing:-0.379px;'>API:</div>
<div class='t M' style='left:981.00px;top:719.02px;font-size:13px;line-height:13px;color:#ececec;font-weight:400;letter-spacing:-0.052px;'>POST /api/cart/add</div>
</div>
<div id="edge"></div>
</body></html>
